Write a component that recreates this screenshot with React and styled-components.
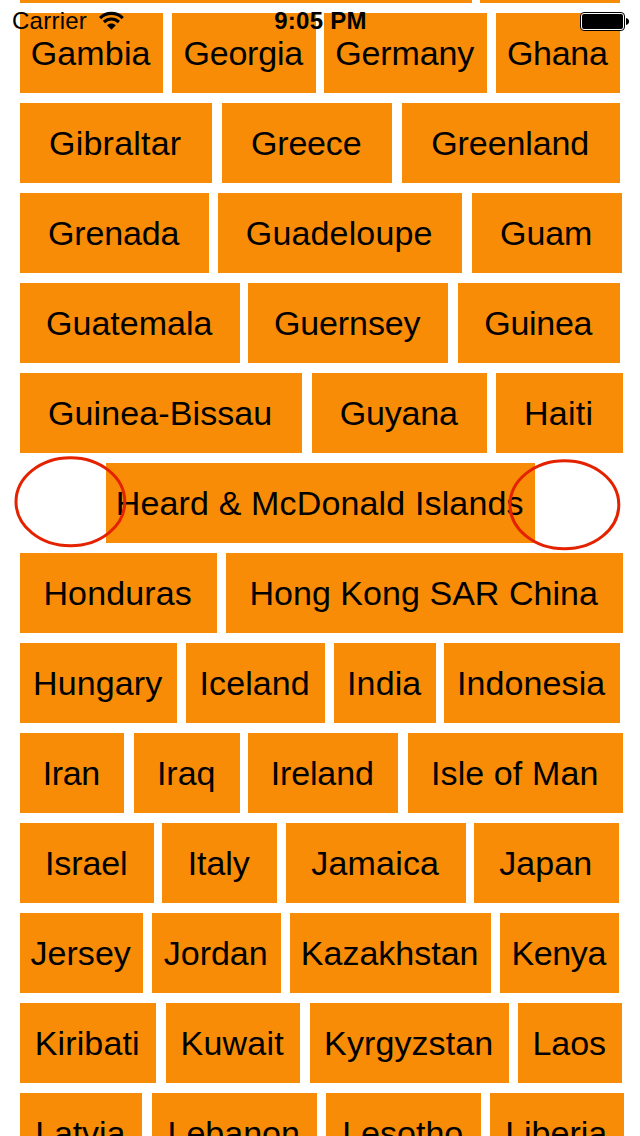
import React from "react";
import styled, { createGlobalStyle } from "styled-components";

const GlobalStyle = createGlobalStyle`
  * { box-sizing: border-box; }
  html, body { margin: 0; padding: 0; background: #fff; overflow: hidden; }
`;

const Screen = styled.main`
  position: relative;
  width: 640px;
  height: 1136px;
  overflow: hidden;
  background: #fff;
  color: #000;
  font-family: "Liberation Sans", Arial, Helvetica, sans-serif;
`;

const Grid = styled.div`
  display: flex;
  flex-direction: column;
  gap: 10px;
  margin-top: -77px;
`;

const Row = styled.div`
  display: flex;
  height: 80px;
  flex: none;
  padding-left: ${(p) => p.$inset || 20}px;
`;

const Tile = styled.div`
  display: flex;
  align-items: center;
  justify-content: center;
  flex: none;
  width: ${(p) => p.$width}px;
  margin-right: ${(p) => p.$gap}px;
  background: #f88c06;
  font-size: 34px;
  line-height: 40px;
  padding: 0 1.6px 1px 0;
  white-space: nowrap;
  letter-spacing: ${(p) => p.$tracking}px;
`;

const StatusBar = styled.header`
  position: absolute;
  inset: 0 0 auto 0;
  height: 40px;
  display: grid;
  grid-template-columns: 1fr auto 1fr;
  align-items: center;
  padding: 2px 11px 0 12px;
  font-size: 24px;
  line-height: 28px;
`;

const Carrier = styled.div`
  display: flex;
  align-items: center;
  gap: 10.5px;
  letter-spacing: 0.25px;
`;

const Clock = styled.div`
  font-weight: 700;
  font-size: 24px;
  letter-spacing: 0.25px;
`;

const BatterySlot = styled.div`
  display: flex;
  justify-content: flex-end;
`;

const Ring = styled.svg`
  position: absolute;
  left: ${(p) => p.$x}px;
  top: ${(p) => p.$y}px;
  width: 114px;
  height: 92px;
`;

/* Each row lists its tiles as [label, left edge, right edge, tracking]. */
const rows = [
  [["", 20, 472, 0], ["", 480, 620, 0]],
  [["Gambia", 20, 163, 0.15], ["Georgia", 172, 316, -0.2], ["Germany", 324, 487, -0.1], ["Ghana", 496, 620, -0.3]],
  [["Gibraltar", 20, 212, 0.2], ["Greece", 222, 392, -0.2], ["Greenland", 402, 620, -0.1]],
  [["Grenada", 20, 209, -0.15], ["Guadeloupe", 218, 462, 0.15], ["Guam", 472, 622, -0.1]],
  [["Guatemala", 20, 240, 0], ["Guernsey", 248, 448, -0.1], ["Guinea", 458, 620, -0.3]],
  [["Guinea-Bissau", 20, 302, 0.1], ["Guyana", 312, 487, -0.2], ["Haiti", 496, 623, 0.3]],
  [["Heard & McDonald Islands", 106, 535, 0.15]],
  [["Honduras", 20, 217, 0.15], ["Hong Kong SAR China", 226, 623, 0.04]],
  [["Hungary", 20, 177, 0.1], ["Iceland", 186, 325, 0.1], ["India", 334, 436, 0.1], ["Indonesia", 444, 620, 0.1]],
  [["Iran", 20, 124, -0.4], ["Iraq", 134, 240, 0], ["Ireland", 248, 398, -0.15], ["Isle of Man", 408, 623, 0.1]],
  [["Israel", 20, 154, -0.1], ["Italy", 162, 277, -0.1], ["Jamaica", 286, 466, 0.2], ["Japan", 474, 619, 0.1]],
  [["Jersey", 20, 143, 0.05], ["Jordan", 152, 281, 0], ["Kazakhstan", 290, 491, 0], ["Kenya", 500, 619, -0.35]],
  [["Kiribati", 20, 156, 0.15], ["Kuwait", 166, 300, 0.2], ["Kyrgyzstan", 310, 509, 0.1], ["Laos", 518, 622, -0.1]],
  [["Latvia", 20, 142, -0.1], ["Lebanon", 152, 317, 0], ["Lesotho", 326, 481, 0], ["Liberia", 490, 624, 0]],
];

function WifiIcon() {
  return (
    <svg width="26" height="20" viewBox="0 0 26 20" fill="none" stroke="#000" strokeWidth="3.2">
      <path d="M2.1 7.1 C8.2 .9 18.6 .9 24.7 7.1" />
      <path d="M5.9 11 C10.2 7 16.6 7 20.9 11" />
      <path d="M9 14.2 C11.4 11.9 15.4 11.9 17.8 14.2 L13.4 18.7 Z" fill="#000" stroke="none" />
    </svg>
  );
}

function BatteryIcon() {
  return (
    <svg width="49" height="19" viewBox="0 0 49 19">
      <rect x=".5" y=".5" width="44" height="18" rx="3.5" fill="#fff" stroke="#000" />
      <rect x="2" y="2" width="41" height="15" rx="2" fill="#000" />
      <path d="M46 6 C48 6.3 49 7.6 49 9.5 C49 11.4 48 12.7 46 13 Z" fill="#000" />
    </svg>
  );
}

function Annotation({ x, y }) {
  return (
    <Ring $x={x} $y={y} viewBox="0 0 114 92">
      <ellipse cx="57.4" cy="45.8" rx="54.4" ry="44" fill="none" stroke="#e42200" strokeWidth="3" />
    </Ring>
  );
}

export default function App() {
  return (
    <Screen>
      <GlobalStyle />
      <Grid>
        {rows.map((row, r) => (
          <Row key={r} $inset={row[0][1]}>
            {row.map(([label, left, right, tracking], i) => (
              <Tile key={i} $width={right - left} $gap={row[i + 1] ? row[i + 1][1] - right : 0} $tracking={tracking}>
                {label}
              </Tile>
            ))}
          </Row>
        ))}
      </Grid>
      <StatusBar>
        <Carrier>
          Carrier
          <WifiIcon />
        </Carrier>
        <Clock>9:05 PM</Clock>
        <BatterySlot>
          <BatteryIcon />
        </BatterySlot>
      </StatusBar>
      <Annotation x={13} y={456} />
      <Annotation x={507} y={459} />
    </Screen>
  );
}
